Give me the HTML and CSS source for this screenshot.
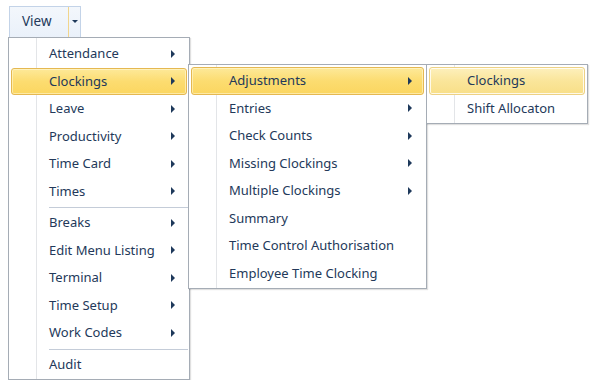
FILE: index.html
```html
<!DOCTYPE html>
<html lang="en">
<head>
    <meta charset="UTF-8">
    <title>View menu</title>
    <link rel="stylesheet" href="styles.css">
</head>
<body>
    <div class="toolbar">
        <div class="view-btn">
            <span class="view-label">View</span>
            <span class="view-drop"><span class="caret-down"></span></span>
        </div>
    </div>

    <!-- main dropdown -->
    <div class="menu menu-main">
        <ul class="menu-group">
            <li class="item"><span class="label">Attendance</span><span class="arrow"></span></li>
            <li class="item active"><span class="label">Clockings</span><span class="arrow"></span></li>
            <li class="item"><span class="label">Leave</span><span class="arrow"></span></li>
            <li class="item"><span class="label">Productivity</span><span class="arrow"></span></li>
            <li class="item"><span class="label">Time Card</span><span class="arrow"></span></li>
            <li class="item"><span class="label">Times</span><span class="arrow"></span></li>
        </ul>
        <div class="sep"></div>
        <ul class="menu-group">
            <li class="item"><span class="label">Breaks</span><span class="arrow"></span></li>
            <li class="item"><span class="label">Edit Menu Listing</span><span class="arrow"></span></li>
            <li class="item"><span class="label">Terminal</span><span class="arrow"></span></li>
            <li class="item"><span class="label">Time Setup</span><span class="arrow"></span></li>
            <li class="item"><span class="label">Work Codes</span><span class="arrow"></span></li>
        </ul>
        <div class="sep"></div>
        <ul class="menu-group">
            <li class="item"><span class="label">Audit</span></li>
        </ul>

        <!-- Clockings submenu -->
        <div class="menu menu-clockings">
            <ul class="menu-group">
                <li class="item active"><span class="label">Adjustments</span><span class="arrow"></span></li>
                <li class="item"><span class="label">Entries</span><span class="arrow"></span></li>
                <li class="item"><span class="label">Check Counts</span><span class="arrow"></span></li>
                <li class="item"><span class="label">Missing Clockings</span><span class="arrow"></span></li>
                <li class="item"><span class="label">Multiple Clockings</span><span class="arrow"></span></li>
                <li class="item"><span class="label">Summary</span></li>
                <li class="item"><span class="label">Time Control Authorisation</span></li>
                <li class="item"><span class="label">Employee Time Clocking</span></li>
            </ul>

            <!-- Adjustments submenu -->
            <div class="menu menu-adjust">
                <ul class="menu-group">
                    <li class="item active soft"><span class="label">Clockings</span></li>
                    <li class="item"><span class="label">Shift Allocaton</span></li>
                </ul>
            </div>
        </div>
    </div>
</body>
</html>
```

FILE: styles.css
```css
* {
    box-sizing: border-box;
    margin: 0;
    padding: 0;
}
body {
    background: #fff;
    color: #23395a;
    font-family: 'Noto Sans', 'Liberation Sans', sans-serif;
    font-size: 13px;
}
.toolbar {
    padding: 6px 0 0 9px;
    height: 37px;
}
.view-btn {
    display: flex;
    width: 72px;
    height: 31px;
    border: 1px solid #c3d3e8;
    border-bottom: none;
    background: linear-gradient(#f3f7fc, #eaf1fa);
}
.view-label {
    width: 58px;
    padding-left: 12px;
    line-height: 28px;
    font-size: 13.5px;
}
.view-drop {
    flex: 1;
    border-left: 1px solid #f1d58c;
    display: flex;
    align-items: center;
    justify-content: center;
    padding-bottom: 2px;
}
.caret-down {
    border-left: 3px solid transparent;
    border-right: 3px solid transparent;
    border-top: 3px solid #1e395b;
}
.menu {
    background: #fff linear-gradient(to right, #fff 27px, #e3e5e8 27px, #e3e5e8 28px, #fff 28px);
    border: 1px solid #a5acb5;
    padding: 2px 0 1px;
    box-shadow: 1px 1px 1px rgba(0, 0, 0, 0.12);
}
.menu-main {
    position: relative;
    width: 182px;
    margin-left: 8px;
}
.menu-clockings {
    position: absolute;
    left: 179px;
    top: 26px;
    width: 239px;
}
.menu-adjust {
    position: absolute;
    left: 237px;
    top: -1px;
    width: 162px;
}
.menu-group {
    list-style: none;
}
.item {
    display: flex;
    align-items: center;
    justify-content: space-between;
    height: 27.5px;
    margin: 0 2px;
    padding: 0 11px 0 37px;
    border: 1px solid transparent;
    border-radius: 3px;
}
.label {
    padding-bottom: 1px;
}
.item.active {
    border-color: #e5b851;
    background: linear-gradient(#fde999, #fcdc70 50%, #fbd660);
    box-shadow: inset 0 0 0 1px rgba(255, 250, 220, 0.55);
}
.item.soft {
    border-color: #edd184;
    background: linear-gradient(#fdf0bc, #fae59a 50%, #f8df88);
    box-shadow: inset 0 0 0 1px rgba(255, 255, 255, 0.8);
}
.arrow {
    border-top: 4px solid transparent;
    border-bottom: 4px solid transparent;
    border-left: 4px solid #1e395b;
}
.sep {
    height: 4px;
    margin-left: 40px;
    margin-right: 1px;
    border-top: 2px solid #fff;
    background: linear-gradient(#c4ccd8 1px, #fff 1px);
}
```
